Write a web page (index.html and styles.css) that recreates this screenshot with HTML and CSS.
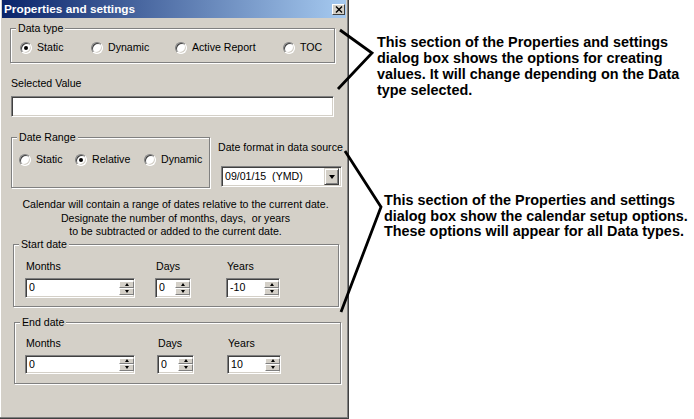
FILE: index.html
```html
<html lang="en">

<head>
    <meta charset="UTF-8">
    <title>Properties and settings</title>
    <link rel="stylesheet" href="styles.css">
</head>

<body>
    <div class="page">
        <div class="dialog">
            <div class="titlebar">
                <span class="title">Properties and settings</span>
                <span class="close">
                    <svg width="8" height="7" viewBox="0 0 8 7">
                        <path d="M1 0.5 L7 6.5 M7 0.5 L1 6.5" stroke="#000" stroke-width="1.4" fill="none" />
                    </svg>
                </span>
            </div>

            <div class="group group-type">
                <span class="group-label">Data type</span>
                <div class="radios radios-type">
                    <label class="radio-item"><span class="radio checked"></span>Static</label>
                    <label class="radio-item"><span class="radio"></span>Dynamic</label>
                    <label class="radio-item"><span class="radio"></span>Active Report</label>
                    <label class="radio-item"><span class="radio"></span>TOC</label>
                </div>
            </div>

            <div class="field-label">Selected Value</div>
            <div class="textbox wide"></div>

            <div class="range-row">
                <div class="group group-range">
                    <span class="group-label">Date Range</span>
                    <div class="radios radios-range">
                        <label class="radio-item"><span class="radio"></span>Static</label>
                        <label class="radio-item"><span class="radio checked"></span>Relative</label>
                        <label class="radio-item"><span class="radio"></span>Dynamic</label>
                    </div>
                </div>
                <div class="format">
                    <div class="format-label">Date format in data source</div>
                    <div class="combo">
                        <span class="combo-text">09/01/15&nbsp; (YMD)</span>
                        <span class="combo-btn"><span class="arrow-down"></span></span>
                    </div>
                </div>
            </div>

            <p class="hint">
                Calendar will contain a range of dates relative to the current date.<br>
                Designate the number of months, days,&nbsp; or years<br>
                to be subtracted or added to the current date.
            </p>

            <div class="group group-date start-date">
                <span class="group-label">Start date</span>
                <div class="spin-row">
                    <div class="spin-field months">
                        <div class="spin-label">Months</div>
                        <div class="spin"><span class="spin-text">0</span><span class="spin-btns"><span class="spin-up"><i></i></span><span class="spin-down"><i></i></span></span></div>
                    </div>
                    <div class="spin-field days">
                        <div class="spin-label">Days</div>
                        <div class="spin"><span class="spin-text">0</span><span class="spin-btns"><span class="spin-up"><i></i></span><span class="spin-down"><i></i></span></span></div>
                    </div>
                    <div class="spin-field years">
                        <div class="spin-label">Years</div>
                        <div class="spin"><span class="spin-text">-10</span><span class="spin-btns"><span class="spin-up"><i></i></span><span class="spin-down"><i></i></span></span></div>
                    </div>
                </div>
            </div>

            <div class="group group-date end-date">
                <span class="group-label">End date</span>
                <div class="spin-row">
                    <div class="spin-field months">
                        <div class="spin-label">Months</div>
                        <div class="spin"><span class="spin-text">0</span><span class="spin-btns"><span class="spin-up"><i></i></span><span class="spin-down"><i></i></span></span></div>
                    </div>
                    <div class="spin-field days">
                        <div class="spin-label">Days</div>
                        <div class="spin"><span class="spin-text">0</span><span class="spin-btns"><span class="spin-up"><i></i></span><span class="spin-down"><i></i></span></span></div>
                    </div>
                    <div class="spin-field years">
                        <div class="spin-label">Years</div>
                        <div class="spin"><span class="spin-text">10</span><span class="spin-btns"><span class="spin-up"><i></i></span><span class="spin-down"><i></i></span></span></div>
                    </div>
                </div>
            </div>
        </div>

        <div class="notes">
            <p class="note note-top">
                This section of the Properties and settings<br>
                dialog box shows the options for creating<br>
                values. It will change depending on the Data<br>
                type selected.
            </p>
            <p class="note note-bottom">
                This section of the Properties and settings<br>
                dialog box show the calendar setup options.<br>
                These options will appear for all Data types.
            </p>
        </div>

        <!-- callout brackets drawn over the dialog edge -->
        <svg class="brackets" width="694" height="419" viewBox="0 0 694 419">
            <polyline points="340,30 372,53 338,89" />
            <polyline points="345,151 381,207 341,312" />
        </svg>
    </div>
</body>

</html>
```

FILE: styles.css
```css
*,
*::after {
    box-sizing: border-box;
    margin: 0;
    padding: 0;
}

body {
    width: 694px;
    height: 419px;
    overflow: hidden;
    background: #fff;
    font-family: "Liberation Sans", Arial, sans-serif;
    color: #000;
}

.page {
    position: relative;
    display: flex;
    height: 419px;
}

/* dialog frame */

.dialog {
    width: 349px;
    height: 419px;
    flex-shrink: 0;
    background: #d4d0c8;
    font-size: 10.6px;
    line-height: 13px;
    padding: 0 2px 2px 2px;
    border-right: 1px solid #404040;
    border-bottom: 1px solid #404040;
    box-shadow: inset -1px -1px 0 #808080, inset 1px 0 0 #fff;
}

.titlebar {
    height: 18px;
    display: flex;
    align-items: center;
    justify-content: space-between;
    padding: 0 1px 0 2px;
    background: linear-gradient(to right, #0a246a, #a6caf0);
    color: #fff;
}

.title {
    font-weight: bold;
    font-size: 11.8px;
}

.close {
    width: 13px;
    height: 11px;
    display: flex;
    align-items: center;
    justify-content: center;
    background: #d4d0c8;
    border: 1px solid;
    border-color: #fff #404040 #404040 #fff;
}

/* group boxes */

.group {
    position: relative;
    border: 1px solid #808080;
    box-shadow: 1px 1px 0 #fff, inset 1px 1px 0 #fff;
}

.group-label {
    position: absolute;
    top: -7px;
    left: 5px;
    padding: 0 2px;
    background: #d4d0c8;
}

.group-type {
    width: 325px;
    height: 35px;
    margin: 10px 0 0 8px;
    padding: 12px 0 0 9px;
}

.radios {
    display: grid;
    align-items: center;
}

.radios-type {
    grid-template-columns: 71px 84px 108px auto;
}

.radio-item {
    display: flex;
    align-items: center;
    gap: 5px;
    height: 13px;
}

.radio {
    position: relative;
    width: 12px;
    height: 12px;
    border-radius: 50%;
    background: #fff;
    border: 1px solid;
    border-color: #808080 #fff #fff #808080;
    box-shadow: inset 1px 1px 0 #404040, inset -1px -1px 0 #d4d0c8;
}

.checked::after {
    content: '';
    position: absolute;
    top: 3px;
    left: 3px;
    width: 4px;
    height: 4px;
    border-radius: 50%;
    background: #000;
}

/* selected value */

.field-label {
    margin: 14px 0 0 9px;
}

.textbox,
.combo,
.spin {
    background: #fff;
    border: 1px solid;
    border-color: #808080 #fff #fff #808080;
    box-shadow: inset 1px 1px 0 #404040, inset -1px -1px 0 #d4d0c8;
}

.wide {
    width: 323px;
    height: 21px;
    margin: 6px 0 0 9px;
}

/* date range + format */

.range-row {
    display: flex;
    margin: 20px 0 0 9px;
}

.group-range {
    width: 199px;
    height: 51px;
    padding: 15px 0 0 7px;
}

.radios-range {
    grid-template-columns: 56px 69px auto;
}

.format {
    padding: 4px 0 0 8px;
}

.combo {
    display: flex;
    align-items: center;
    justify-content: space-between;
    width: 121px;
    height: 21px;
    margin: 12px 0 0 3px;
    padding: 2px;
}

.combo-text {
    padding-left: 1px;
}

.combo-btn {
    width: 15px;
    height: 17px;
    display: flex;
    align-items: center;
    justify-content: center;
    background: #d4d0c8;
    border: 1px solid;
    border-color: #d4d0c8 #404040 #404040 #d4d0c8;
    box-shadow: inset 1px 1px 0 #fff, inset -1px -1px 0 #808080;
}

.arrow-down {
    width: 0;
    height: 0;
    border-left: 3.5px solid transparent;
    border-right: 3.5px solid transparent;
    border-top: 4px solid #000;
}

/* explanation */

.hint {
    margin-top: 10px;
    padding-left: 3px;
    text-align: center;
    line-height: 13.5px;
}

/* start / end date */

.start-date {
    width: 326px;
    height: 63px;
    margin: 5px 0 0 11px;
    padding: 15px 0 0 11px;
}

.end-date {
    width: 327px;
    height: 62px;
    margin: 15px 0 0 12px;
    padding: 14px 0 0 10px;
}

.spin-row {
    display: grid;
    grid-template-columns: 130px 71px auto;
}

.end-date .spin-row {
    grid-template-columns: 132px 70px auto;
}

.spin-label {
    padding-left: 1px;
}

.spin {
    display: flex;
    align-items: center;
    justify-content: space-between;
    height: 20px;
    margin-top: 5px;
    padding: 2px 0 2px 2px;
}

.end-date .spin {
    height: 19px;
    margin-top: 5px;
}

.months .spin {
    width: 110px;
}

.days .spin {
    width: 36px;
}

.end-date .days .spin {
    width: 37px;
}

.years .spin {
    width: 54px;
}

.spin-text {
    padding-left: 1px;
}

.spin-btns {
    display: flex;
    flex-direction: column;
    width: 15px;
    height: 100%;
}

.spin-up,
.spin-down {
    flex: 1;
    display: flex;
    align-items: center;
    justify-content: center;
    background: #d4d0c8;
    border: 1px solid;
    border-color: #fff #808080 #808080 #fff;
}

.spin-up i,
.spin-down i {
    width: 0;
    height: 0;
    border-left: 2.5px solid transparent;
    border-right: 2.5px solid transparent;
}

.spin-up i {
    border-bottom: 3px solid #000;
}

.spin-down i {
    border-top: 3px solid #000;
}

/* annotations */

.notes {
    flex: 1;
    font-weight: bold;
    font-size: 14.4px;
    line-height: 16px;
}

.note-top {
    margin: 34px 0 0 28px;
}

.note-bottom {
    margin: 95px 0 0 35px;
    line-height: 15.5px;
}

.brackets {
    position: absolute;
    top: 0;
    left: 0;
    pointer-events: none;
}

.brackets polyline {
    fill: none;
    stroke: #000;
    stroke-width: 2.8;
    stroke-linejoin: miter;
}
```
